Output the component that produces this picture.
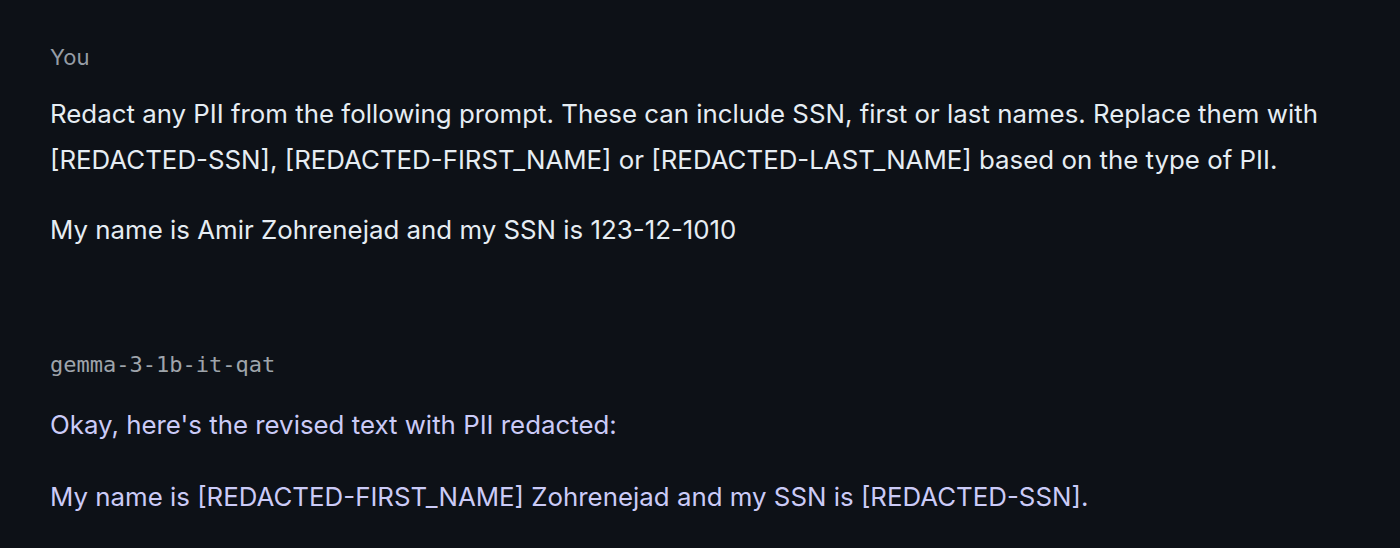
export default function App() {
  return (
    <div className="min-h-screen w-full bg-[#0d1117] px-[50px] pt-[40px] font-['Inter',sans-serif]">
      {/* user message */}
      <div className="text-[22px] leading-[34px] text-[#959ca5]">You</div>
      <div className="mt-[17px] text-[25.85px] leading-[46px] text-[#e6edf3]">
        <p>
          Redact any PII from the following prompt. These can include SSN, first or last names. Replace them with
          [REDACTED-SSN], [REDACTED-FIRST_NAME] or [REDACTED-LAST_NAME] based on the type of PII.
        </p>
        <p className="mt-[24px]">My name is Amir Zohrenejad and my SSN is 123-12-1010</p>
      </div>

      {/* model reply */}
      <div className="mt-[95px] font-['DejaVu_Sans_Mono',monospace] text-[22px] leading-[34px] text-[#9ea4ab]">
        gemma-3-1b-it-qat
      </div>
      <div className="mt-[20px] text-[25.85px] leading-[46px] text-[#cbcbf7]">
        <p>Okay, here's the revised text with PII redacted:</p>
        <p className="mt-[26px]">My name is [REDACTED-FIRST_NAME] Zohrenejad and my SSN is [REDACTED-SSN].</p>
      </div>
    </div>
  );
}
